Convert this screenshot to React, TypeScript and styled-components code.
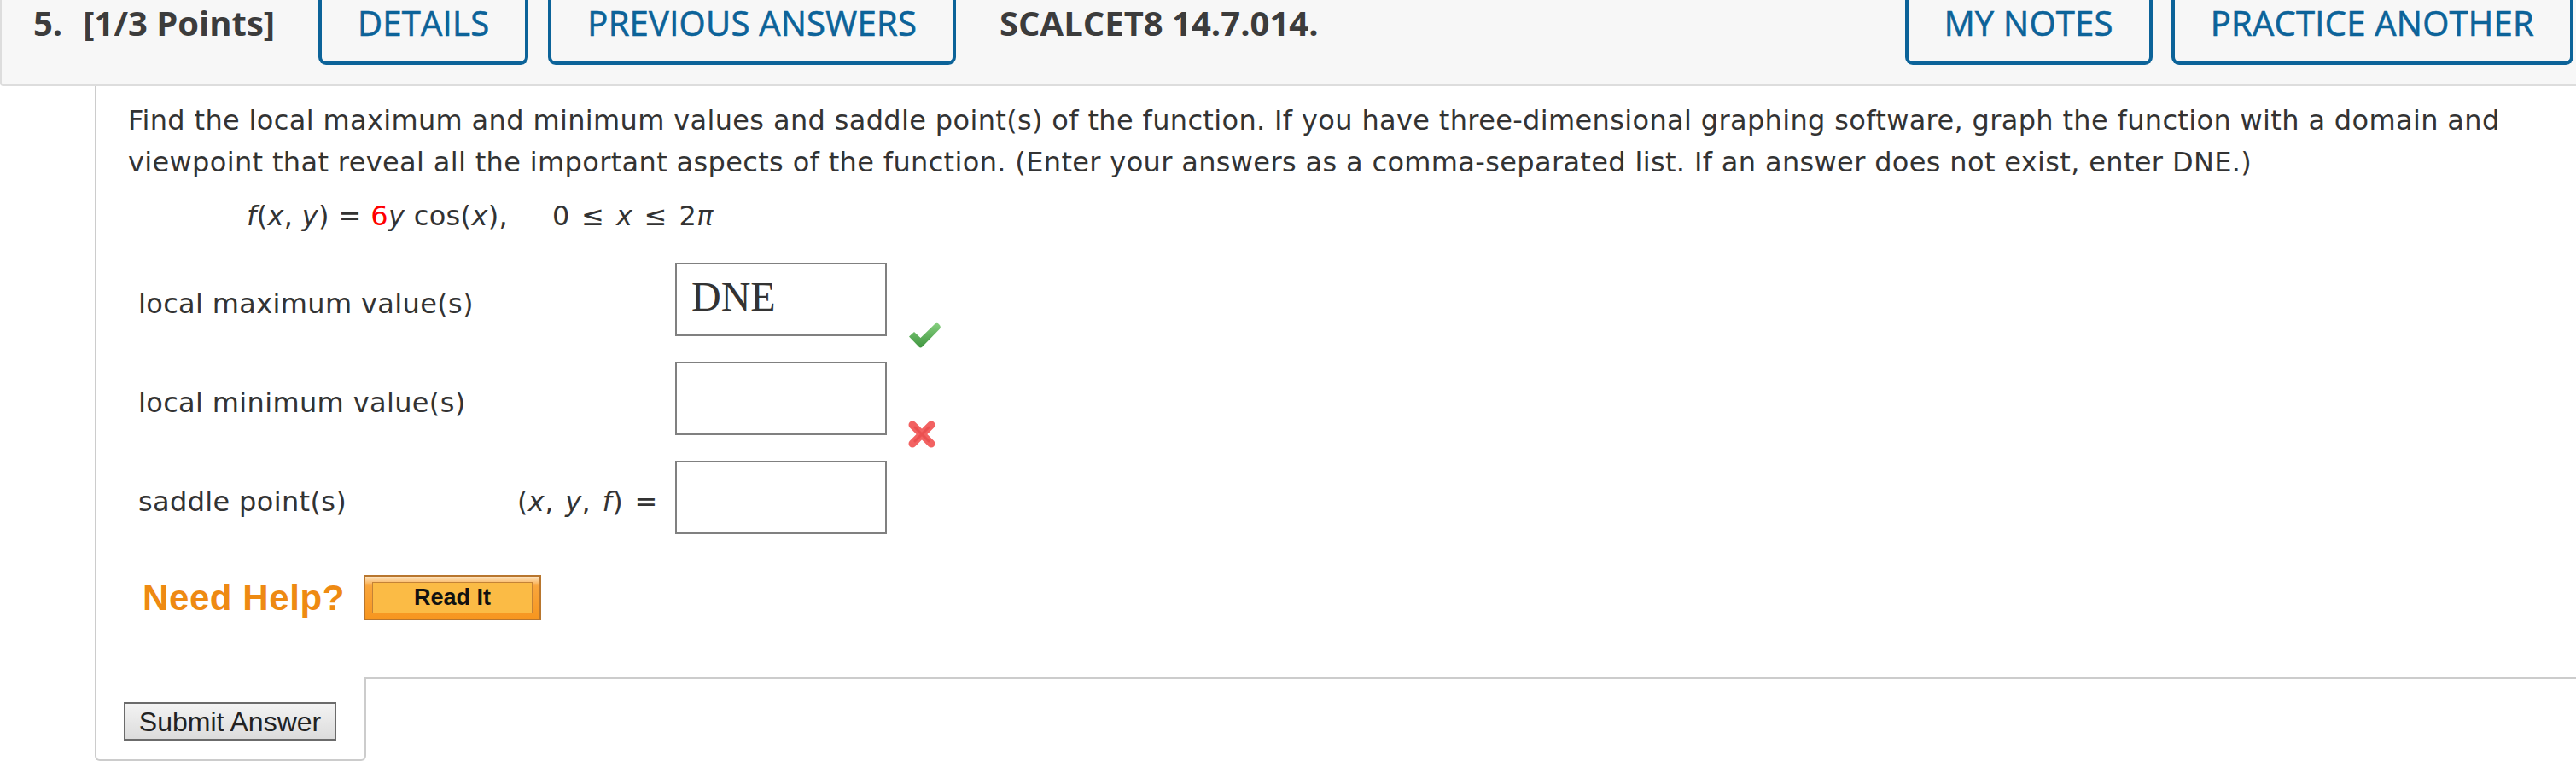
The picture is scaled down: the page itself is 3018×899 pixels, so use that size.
import React from "react";
import styled, { createGlobalStyle } from "styled-components";

const GlobalStyle = createGlobalStyle`
  html, body {
    margin: 0;
    padding: 0;
    background: #fff;
  }
  body {
    font-family: "DejaVu Sans", Verdana, sans-serif;
    color: #333;
  }
`;

const Page = styled.div`
  width: 3018px;
  overflow: hidden;
`;

const Header = styled.header`
  display: flex;
  align-items: flex-start;
  height: 99px;
  padding-left: 37px;
  background: #f7f7f7;
  border-left: 2px solid #ddd;
  border-bottom: 2px solid #ddd;
  border-bottom-left-radius: 4px;
  font-family: "Open Sans", sans-serif;
  font-size: 40px;
  line-height: 54px;
`;

const Title = styled.div`
  font-weight: 700;
  color: #3c3c3c;
  margin-right: 51px;
  white-space: nowrap;
`;

const QNum = styled.span`
  margin-right: 24px;
`;

const Code = styled.div`
  font-weight: 700;
  color: #3c3c3c;
  margin-left: 28px;
  white-space: nowrap;
`;

const Spacer = styled.div`
  flex: 1;
`;

const NavButton = styled.button<{ $gap?: number }>`
  height: 76px;
  box-sizing: border-box;
  margin: 0 ${({ $gap }) => $gap ?? 23}px 0 0;
  padding: 0 42px 18px;
  background: transparent;
  border: 4px solid #0c6399;
  border-top: none;
  border-radius: 0 0 9px 9px;
  color: #0c6399;
  font-family: inherit;
  font-size: 40px;
  font-weight: 400;
  letter-spacing: 0.25px;
  -webkit-text-stroke: 0.6px #0c6399;
  line-height: 54px;
  white-space: nowrap;
  cursor: pointer;
`;

const Question = styled.section`
  margin-left: 111px;
`;

const Body = styled.div`
  height: 693px;
  box-sizing: border-box;
  padding: 16px 0 0 37px;
  border-left: 2px solid #ccc;
`;

const Prompt = styled.p`
  margin: 0;
  font-size: 32px;
  letter-spacing: 0.35px;
  line-height: 49px;
  white-space: nowrap;
`;

const Formula = styled.div`
  margin-top: 14px;
  padding-left: 139px;
  font-size: 32px;
  letter-spacing: 0.35px;
  line-height: 49px;
  white-space: nowrap;
`;

const Var = styled.i`
  font-style: italic;
`;

const Coef = styled.span`
  color: #f00;
`;

const Domain = styled.span`
  margin-left: 52px;
  word-spacing: 3px;
`;

const Answers = styled.div`
  margin-top: 30px;
  padding-left: 12px;
  display: flex;
  flex-direction: column;
  gap: 30px;
`;

const Row = styled.div`
  display: flex;
  align-items: center;
  height: 86px;
  font-size: 32px;
  letter-spacing: 0.35px;
`;

const Label = styled.div`
  width: 444px;
  padding-top: 10px;
  white-space: nowrap;
`;

const Prefix = styled.div`
  width: 164px;
  padding-top: 10px;
  margin-right: 21px;
  text-align: right;
  word-spacing: 3px;
  white-space: nowrap;
`;

const AnswerInput = styled.input`
  width: 248px;
  height: 86px;
  box-sizing: border-box;
  margin: 0;
  padding: 0 0 8px 17px;
  border: 2px solid #808080;
  border-radius: 0;
  background: #fff;
  color: #333;
  font-family: "Liberation Serif", "Times New Roman", serif;
  font-size: 48px;
  letter-spacing: 0;
  outline: none;
`;

const Mark = styled.div<{ $top: number }>`
  align-self: flex-start;
  margin: ${({ $top }) => $top}px 0 0 24px;
  display: flex;
`;

const HelpRow = styled.div`
  display: flex;
  align-items: center;
  gap: 22px;
  margin-top: 48px;
  padding-left: 17px;
`;

const NeedHelp = styled.span`
  font-family: "Liberation Sans", Arial, sans-serif;
  font-weight: 700;
  font-size: 42px;
  letter-spacing: 0.6px;
  line-height: 1;
  color: #ee8a12;
`;

const ReadIt = styled.button`
  width: 208px;
  height: 53px;
  box-sizing: border-box;
  padding: 6px 8px;
  border: 2px solid #b8762e;
  background: linear-gradient(#fde3bf 0%, #f9a63c 22%, #f7961f 100%);
  cursor: pointer;
`;

const ReadItInner = styled.span`
  display: flex;
  align-items: center;
  justify-content: center;
  height: 100%;
  box-sizing: border-box;
  border: 1px solid #c48236;
  background: #fbbb45;
  font-family: "Liberation Sans", Arial, sans-serif;
  font-weight: 700;
  font-size: 27px;
  color: #111;
`;

const Footer = styled.div`
  display: flex;
`;

const SubmitTab = styled.div`
  padding: 29px 33px 22px 32px;
  border: 2px solid #ccc;
  border-top: none;
  border-radius: 0 0 6px 6px;
`;

const FooterRest = styled.div`
  flex: 1;
  border-top: 2px solid #ccc;
`;

const SubmitButton = styled.button`
  display: block;
  width: 249px;
  height: 45px;
  box-sizing: border-box;
  padding: 0;
  border: 2px solid #6b6b6b;
  background: linear-gradient(#f3f3f3, #dcdcdc);
  color: #222;
  font-family: "Liberation Sans", Arial, sans-serif;
  font-size: 32px;
  line-height: 1;
  cursor: pointer;
`;

const CheckIcon = () => (
  <svg width="40" height="32" viewBox="0 0 40 32">
    <defs>
      <linearGradient id="chk" x1="0" y1="0" x2="0" y2="1">
        <stop offset="0" stopColor="#86cf7f" />
        <stop offset="1" stopColor="#3f953f" />
      </linearGradient>
    </defs>
    <path
      d="M2 17.5 L8 12 L15.5 19 L32.5 2.5 Q35 1 37 3 L38.5 5 Q39.5 7 38 8.5 L17.5 29.5 Q15.5 31.5 13.5 29.5 Z"
      fill="url(#chk)"
    />
  </svg>
);

const CrossIcon = () => (
  <svg width="34" height="34" viewBox="0 0 34 34">
    <g stroke="#f26262" strokeWidth="9" strokeLinecap="round">
      <line x1="6" y1="6" x2="28" y2="28" />
      <line x1="28" y1="6" x2="6" y2="28" />
    </g>
    <g stroke="#e33c3c" strokeWidth="3" strokeLinecap="round" opacity="0.45">
      <line x1="9" y1="9" x2="25" y2="25" />
      <line x1="25" y1="9" x2="9" y2="25" />
    </g>
  </svg>
);

export default function App() {
  return (
    <Page>
      <GlobalStyle />
      <Header>
        <Title>
          <QNum>5.</QNum>[1/3 Points]
        </Title>
        <NavButton>DETAILS</NavButton>
        <NavButton>PREVIOUS ANSWERS</NavButton>
        <Code>SCALCET8 14.7.014.</Code>
        <Spacer />
        <NavButton $gap={22}>MY NOTES</NavButton>
        <NavButton $gap={3}>PRACTICE ANOTHER</NavButton>
      </Header>

      <Question>
        <Body>
          <Prompt>
            Find the local maximum and minimum values and saddle point(s) of the function. If you have
            three-dimensional graphing software, graph the function with a domain and
            <br />
            viewpoint that reveal all the important aspects of the function. (Enter your answers as a
            comma-separated list. If an answer does not exist, enter DNE.)
          </Prompt>
          <Formula>
            <Var>f</Var>(<Var>x</Var>, <Var>y</Var>) = <Coef>6</Coef>
            <Var>y</Var> cos(<Var>x</Var>),
            <Domain>
              0 ≤ <Var>x</Var> ≤ 2<Var>π</Var>
            </Domain>
          </Formula>

          <Answers>
            <Row>
              <Label>local maximum value(s)</Label>
              <Prefix />
              <AnswerInput defaultValue="DNE" />
              <Mark $top={69}>
                <CheckIcon />
              </Mark>
            </Row>
            <Row>
              <Label>local minimum value(s)</Label>
              <Prefix />
              <AnswerInput defaultValue="" />
              <Mark $top={68}>
                <CrossIcon />
              </Mark>
            </Row>
            <Row>
              <Label>saddle point(s)</Label>
              <Prefix>
                (<Var>x</Var>, <Var>y</Var>, <Var>f</Var>) =
              </Prefix>
              <AnswerInput defaultValue="" />
            </Row>
          </Answers>

          <HelpRow>
            <NeedHelp>Need Help?</NeedHelp>
            <ReadIt>
              <ReadItInner>Read It</ReadItInner>
            </ReadIt>
          </HelpRow>
        </Body>
        <Footer>
          <SubmitTab>
            <SubmitButton>Submit Answer</SubmitButton>
          </SubmitTab>
          <FooterRest />
        </Footer>
      </Question>
    </Page>
  );
}
